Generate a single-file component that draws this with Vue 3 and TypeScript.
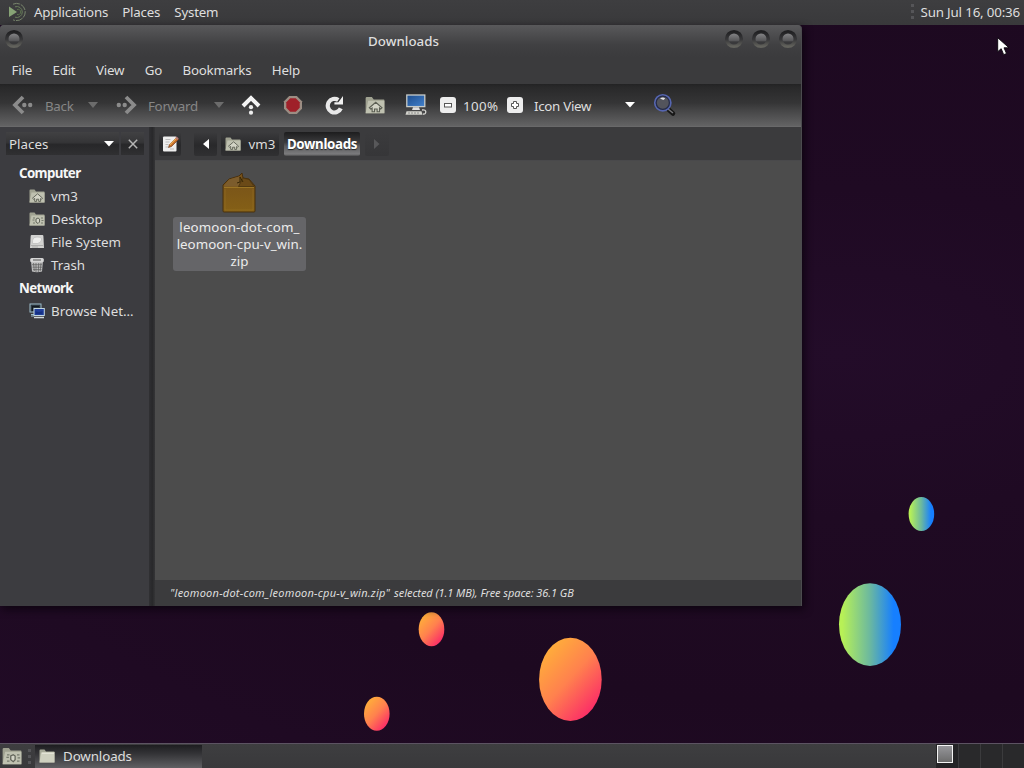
<script setup lang="ts">
interface Place {
  label: string
  icon?: string
}

interface Bubble {
  cx: number
  cy: number
  rx: number
  ry: number
  fill: string
}

const panelMenus: string[] = ['Applications', 'Places', 'System']
const menus: string[] = ['File', 'Edit', 'View', 'Go', 'Bookmarks', 'Help']

const places: Place[] = [
  { label: 'Computer' },
  { label: 'vm3', icon: 'home-folder' },
  { label: 'Desktop', icon: 'desktop-folder' },
  { label: 'File System', icon: 'drive' },
  { label: 'Trash', icon: 'trash' },
  { label: 'Network' },
  { label: 'Browse Net…', icon: 'network' },
]

const fileNameLines: string[] = ['leomoon-dot-com_', 'leomoon-cpu-v_win.', 'zip']

const bubbles: Bubble[] = [
  { cx: 431.5, cy: 629.3, rx: 12.8, ry: 17, fill: 'url(#warm)' },
  { cx: 376.8, cy: 713.8, rx: 12.8, ry: 17, fill: 'url(#warm)' },
  { cx: 570.4, cy: 679.4, rx: 31.3, ry: 41.6, fill: 'url(#warm)' },
  { cx: 921.4, cy: 513.9, rx: 12.8, ry: 17, fill: 'url(#cool)' },
  { cx: 870, cy: 624.6, rx: 31, ry: 41.4, fill: 'url(#cool)' },
]
</script>

<template>
  <div class="screen">
    <svg class="wallpaper" width="1024" height="768" viewBox="0 0 1024 768">
      <defs>
        <linearGradient id="warm" x1="0.1" y1="0.1" x2="0.8" y2="0.95">
          <stop offset="0" stop-color="#ffb139" />
          <stop offset="0.5" stop-color="#ff814e" />
          <stop offset="1" stop-color="#fb2968" />
        </linearGradient>
        <linearGradient id="cool" x1="0" y1="0.5" x2="1" y2="0.5">
          <stop offset="0.05" stop-color="#b8f156" />
          <stop offset="0.5" stop-color="#6bb8a0" />
          <stop offset="0.88" stop-color="#167fff" />
        </linearGradient>
        <linearGradient id="ring" x1="0" y1="0" x2="0" y2="1">
          <stop offset="0" stop-color="#202022" />
          <stop offset="0.55" stop-color="#39393b" />
          <stop offset="1" stop-color="#62625c" />
        </linearGradient>
        <linearGradient id="knob" x1="0" y1="0" x2="0" y2="1">
          <stop offset="0.1" stop-color="#858587" />
          <stop offset="0.6" stop-color="#59595b" />
          <stop offset="0.7" stop-color="#39393b" />
        </linearGradient>
        <linearGradient id="box" x1="0" y1="0" x2="0" y2="1">
          <stop offset="0" stop-color="#75501a" />
          <stop offset="1" stop-color="#856016" />
        </linearGradient>
        <linearGradient id="display" x1="0" y1="0" x2="1" y2="1">
          <stop offset="0" stop-color="#1d4c8c" />
          <stop offset="1" stop-color="#4382cd" />
        </linearGradient>
        <symbol id="folder" viewBox="0 0 16 16">
          <path d="M.5 2.5Q.5 1.5 1.5 1.5h4l1.5 2h8q.5 0 .5.5v10.5H.5z" fill="#a5a796" />
          <path d="M3 4h12.5v10.5H.5L2 5z" fill="#cfd0bf" />
          <path d="M3 5.5h12" stroke="#e3e3d6" />
        </symbol>
        <symbol id="home-folder" viewBox="0 0 16 16">
          <path d="M.5 2.5Q.5 1.5 1.5 1.5h4l1.5 2h8q.5 0 .5.5v10.5H.5z" fill="#a0a291" />
          <path d="M2.5 4.5h13v10H.5z" fill="#bfc1b0" />
          <path d="M3.5 10.2 8.6 5.8l5 4.4-1 1-1-.8v3H9.7v-2.2H7.6v2.2H5.7v-3l-1.1.8z" fill="#d3d4c6" stroke="#5c5f54" stroke-width=".9" />
        </symbol>
        <symbol id="desktop-folder" viewBox="0 0 16 16">
          <path d="M.5 2.5Q.5 1.5 1.5 1.5h4l1.5 2h8q.5 0 .5.5v10.5H.5z" fill="#a0a291" />
          <path d="M2.5 4.5h13v10H.5z" fill="#bfc1b0" />
          <path d="M4 7h2M3.5 9h2M4 12h2M12 7h2M12.5 9.5h2M12 12h2" stroke="#777b6d" />
          <path d="m9 7 1.5 1v3L9 12.5 7 11V8z" fill="#d3d4c6" stroke="#616459" />
        </symbol>
        <symbol id="drive" viewBox="0 0 16 16">
          <path d="M2.5 1h11q.8 0 .9.9L15 14H1L1.7 1.9Q1.8 1 2.5 1z" fill="#d2d2d0" />
          <path d="M3.5 9.5Q2.8 3 8 3t4.5 3-4 3.5z" fill="#eeeeec" stroke="#bbb" stroke-width=".7" />
          <path d="M2 11.5h12M3 13h6" stroke="#a4a4a3" stroke-width=".8" />
        </symbol>
        <symbol id="trash" viewBox="0 0 16 16">
          <path d="M2 4h12l-1 10.5q-5 1.5-10 0z" fill="#bdbdbd" />
          <path d="m4.5 6 .8 8M7 6v9M9.7 6l-.4 9M12 6l-.8 8M3 7.7h10M3.5 10.2h9.5M4 12.6h8.5" stroke="#5c5c5c" stroke-width=".7" />
          <rect x="1.2" y="1" width="13.6" height="4.2" rx="1.5" fill="#d5d5d5" />
          <path d="M4 3h8" stroke="#555" />
        </symbol>
        <symbol id="network" viewBox="0 0 16 16">
          <rect x="1" y="1" width="11" height="8" fill="#2a353c" stroke="#9dbdcb" />
          <path d="M3 3h7v1H4v4H3z" fill="#101820" />
          <path d="M2 11.5h3M2 13h3" stroke="#9dbdcb" />
          <rect x="5" y="5.5" width="10.3" height="7" fill="#203e9b" stroke="#c0d5de" />
          <path d="M6.5 8q3 2 7 0v3h-7z" fill="#153083" />
          <path d="M5 14.5h10" stroke="#d1dade" stroke-width="1.5" />
        </symbol>
      </defs>
      <ellipse v-for="(b, i) in bubbles" :key="i" :cx="b.cx" :cy="b.cy" :rx="b.rx" :ry="b.ry" :fill="b.fill" />
    </svg>

    <header class="panel top-panel">
      <svg class="logo" width="20" height="20" viewBox="0 0 20 20" fill="none">
        <path d="M1 4.5 9 10 1 15z" fill="#87a376" />
        <path d="M5 2.2A8.6 8.6 0 1 1 5 17.8" stroke="#79866d" stroke-width="1" stroke-dasharray="7 1" />
        <path d="M7 4.8a5.5 5.5 0 1 1 0 10.4" stroke="#697d5b" />
        <path d="M9 7.5a2.7 2.7 0 1 1 0 5" stroke="#5c704e" />
      </svg>
      <nav class="panel-menus">
        <span v-for="m in panelMenus" :key="m">{{ m }}</span>
      </nav>
      <i class="grip"></i>
      <time class="clock">Sun Jul 16, 00:36</time>
    </header>

    <main class="workspace">
      <section class="window">
        <div class="titlebar">
          <svg class="knob" width="20" height="20" viewBox="0 0 20 20">
            <circle cx="10" cy="10" r="7.3" fill="url(#knob)" stroke="url(#ring)" stroke-width="3.6" />
          </svg>
          <span class="title">Downloads</span>
          <div class="controls">
            <svg v-for="n in 3" :key="n" class="knob" width="20" height="20" viewBox="0 0 20 20">
              <circle cx="10" cy="10" r="7.3" fill="url(#knob)" stroke="url(#ring)" stroke-width="3.6" />
            </svg>
          </div>
        </div>

        <nav class="menubar">
          <span v-for="m in menus" :key="m">{{ m }}</span>
        </nav>

        <div class="toolbar">
          <div class="tool nav-back">
            <svg width="22" height="20" viewBox="0 0 22 20">
              <path d="M11 2 3 10l8 8" fill="none" stroke="#8b8b8b" stroke-width="3.8" />
              <circle cx="12.3" cy="10" r="2.2" fill="#8b8b8b" /><circle cx="18.2" cy="10" r="2.2" fill="#8b8b8b" />
            </svg>
            <span class="tool-label">Back</span>
            <svg class="caret" width="10" height="6"><path d="M0 0h10L5 6z" fill="#6c6c6c" /></svg>
          </div>
          <div class="tool nav-forward">
            <svg width="22" height="20" viewBox="0 0 22 20">
              <path d="m11 2 8 8-8 8" fill="none" stroke="#8b8b8b" stroke-width="3.8" />
              <circle cx="9.7" cy="10" r="2.2" fill="#8b8b8b" /><circle cx="3.8" cy="10" r="2.2" fill="#8b8b8b" />
            </svg>
            <span class="tool-label">Forward</span>
            <svg class="caret" width="10" height="6"><path d="M0 0h10L5 6z" fill="#6c6c6c" /></svg>
          </div>
          <svg class="up" width="20" height="22" viewBox="0 0 20 22">
            <path d="m2 12 8-8 8 8" fill="none" stroke="#f3f3f3" stroke-width="4" />
            <circle cx="10" cy="13.2" r="2.1" fill="#eee" /><circle cx="10" cy="18.7" r="2.1" fill="#eee" />
          </svg>
          <svg class="stop" width="20" height="20" viewBox="0 0 20 20">
            <path d="M6.2 1h7.6L19 6.2v7.6L13.8 19H6.2L1 13.8V6.2z" fill="#9c8d83" />
            <path d="M7.2 3.3h5.6l3.9 3.9v5.6l-3.9 3.9H7.2l-3.9-3.9V7.2z" fill="#9f2029" />
          </svg>
          <svg class="reload" width="20" height="20" viewBox="0 0 20 20">
            <path d="M14.3 5A6.8 6.8 0 1 0 16.8 13.4" fill="none" stroke="#e8e8e8" stroke-width="4.2" />
            <path d="M19 1V9.5h-8.6V7.3h4z" fill="#f0f0f0" />
          </svg>
          <svg class="home" width="20" height="20"><use href="#home-folder" width="20" height="20" /></svg>
          <svg class="computer" width="22" height="22" viewBox="0 0 22 22">
            <rect x="1.8" y="1" width="18" height="11.6" fill="url(#display)" stroke="#c8ccc9" stroke-width="1.3" />
            <path d="M8 13.2h6l1 2.8H7z" fill="#dedede" />
            <path d="M1.5 17.2h15l1 3.6H.5z" fill="#d3d3cd" />
            <path d="M3 19h12" stroke="#7c7c78" stroke-width=".8" stroke-dasharray="2 1" />
            <path d="M17 16q4-.5 3.8 2t-2.8 2" fill="none" stroke="#d8d8d4" stroke-width="1.3" />
          </svg>
          <svg class="zoom-button zoom-out" width="16" height="16" viewBox="0 0 16 16">
            <rect width="16" height="16" rx="3" fill="#ededed" />
            <rect x="4.5" y="6.5" width="7" height="3.5" fill="#fff" stroke="#555" />
          </svg>
          <span class="zoom-level">100%</span>
          <svg class="zoom-button zoom-in" width="16" height="16" viewBox="0 0 16 16">
            <rect width="16" height="16" rx="3" fill="#ededed" />
            <path d="M6.5 4.5h3v2h2v3h-2v2h-3v-2h-2v-3h2z" fill="#fff" stroke="#555" />
          </svg>
          <span class="view-mode">Icon View</span>
          <svg class="view-caret" width="10" height="6"><path d="M0 0h10L5 5.5z" fill="#fff" /></svg>
          <svg class="search" width="24" height="24" viewBox="0 0 24 24">
            <path d="m15.5 16.5 4.5 4" stroke="#171717" stroke-width="4.5" stroke-linecap="round" />
            <path d="m15 16 5 4" stroke="#77777a" stroke-width="1.4" />
            <circle cx="9.8" cy="9.8" r="8" fill="#53545c" stroke="#5565b0" stroke-width="1.8" />
            <circle cx="9.8" cy="9.8" r="6.6" fill="none" stroke="#252b48" stroke-width="1.2" />
            <path d="M7 5.5q3-2 5.2 0l-1.8 1.5z" fill="#e4e4e4" />
          </svg>
        </div>

        <div class="body">
          <aside class="sidebar">
            <div class="side-header">
              <div class="side-select">
                <span>Places</span>
                <svg width="10" height="6"><path d="M0 0h10L5 5.5z" fill="#fff" /></svg>
              </div>
              <div class="side-close">
                <svg width="10" height="10"><path d="m.8.8 8.4 8.4M9.2.8.8 9.2" stroke="#b4b4b4" stroke-width="1.5" /></svg>
              </div>
            </div>
            <ul class="places">
              <li v-for="p in places" :key="p.label" :class="{ heading: !p.icon }">
                <svg v-if="p.icon" width="16" height="16"><use :href="'#' + p.icon" width="16" height="16" /></svg>
                <span>{{ p.label }}</span>
              </li>
            </ul>
          </aside>
          <div class="splitter"></div>
          <div class="content">
            <div class="pathbar">
              <div class="path-button edit">
                <svg width="18" height="18" viewBox="0 0 18 18">
                  <rect x="2" y="1.5" width="13.5" height="15" rx="1" fill="#eee" />
                  <path d="M4.5 4.5h5M4.5 7h4M4.5 9.5h3M4.5 12h3M9 14h4" stroke="#bcbcbc" />
                  <path d="m7.5 12.5 1-3 7-7 2 2-7 7z" fill="#c66c25" stroke="#704027" stroke-width=".7" />
                  <path d="m8.8 9.8 6.5-6.5" stroke="#edaf5a" stroke-width="1.2" />
                  <path d="m14.2 3 1.5-1.5 2 2-1.5 1.5z" fill="#b57a75" />
                </svg>
              </div>
              <div class="path-button previous">
                <svg width="6" height="10"><path d="M6 0v10L0 5z" fill="#fff" /></svg>
              </div>
              <div class="path-button parent">
                <svg width="16" height="16"><use href="#home-folder" width="16" height="16" /></svg>
                <span>vm3</span>
              </div>
              <div class="path-button current"><span>Downloads</span></div>
              <div class="path-button next">
                <svg width="6" height="10"><path d="M0 0v10l5.5-5z" fill="#58585a" /></svg>
              </div>
            </div>
            <div class="file-view">
              <figure class="file">
                <svg width="36" height="42" viewBox="0 0 36 42">
                  <path d="M1 12 7 6l10-3 3-3 1 5 6 1 6 7v25q0 1-1 1H2q-1 0-1-1z" fill="url(#box)" stroke="#49300d" />
                  <path d="M1.5 13.5 7 6.5l10-3 1.5 4-2 6z" fill="#7c5c2c" />
                  <path d="M16.5 13.5 21 5l6 1.5 5 7z" fill="#6b4a17" stroke="#45300e" stroke-width=".7" />
                  <path d="m15 10 3-1V4l3 5" fill="none" stroke="#372706" />
                  <path d="M2 14.5h30" stroke="#9b7525" />
                  <path d="M3 16v21h28V16" fill="none" stroke="#a07926" stroke-width=".7" opacity=".6" />
                </svg>
                <figcaption>
                  <span v-for="line in fileNameLines" :key="line">{{ line }}</span>
                </figcaption>
              </figure>
            </div>
            <footer class="statusbar">
              <span>"leomoon-dot-com_leomoon-cpu-v_win.zip"</span>
              <span class="status-detail">selected (1.1 MB), Free space: 36.1 GB</span>
            </footer>
          </div>
        </div>
      </section>
    </main>

    <footer class="panel bottom-panel">
      <svg class="show-desktop" width="20" height="20"><use href="#desktop-folder" width="20" height="20" /></svg>
      <i class="grip"></i>
      <div class="task">
        <svg width="16" height="16"><use href="#folder" width="16" height="16" /></svg>
        <span>Downloads</span>
      </div>
      <div class="pager">
        <div class="desk active"><i></i></div>
        <div class="desk"></div>
        <div class="desk"></div>
        <div class="desk"></div>
      </div>
    </footer>

    <svg class="pointer" width="14" height="20" viewBox="0 0 14 20">
      <path d="M.7.7v14l3.5-3 2.5 6 2.8-1.2L7 10.8h5z" fill="#fff" stroke="#08030a" stroke-width=".9" />
    </svg>
  </div>
</template>

<style>
html,
body {
  margin: 0;
  overflow: hidden;
}
</style>

<style scoped>
.screen {
  position: relative;
  display: flex;
  flex-direction: column;
  width: 1024px;
  height: 768px;
  overflow: hidden;
  background: radial-gradient(ellipse at 82% 46%, #230c29 0, #1f0a23 28%, #1d0920 60%, #210b26 100%);
  color: #dedede;
  font-family: "Noto Sans", sans-serif;
  font-size: 13.33px;
  line-height: 18px;
  white-space: nowrap;
  cursor: default;
}
.screen svg { display: block; flex: none; }
.screen .wallpaper { position: absolute; inset: 0; }
.panel {
  position: relative;
  box-sizing: border-box;
  display: flex;
  align-items: center;
  flex: none;
  height: 25px;
  background: linear-gradient(#3e3e40, #39393b);
}
.top-panel { padding-bottom: 2px; }
.logo { margin-left: 8px; }
.panel-menus { display: flex; gap: 14px; margin-left: 6px; letter-spacing: -0.2px; }
.grip {
  width: 3px;
  height: 15px;
  background: repeating-linear-gradient(#555558 0 3px, transparent 3px 6px);
}
.top-panel .grip { margin-left: auto; }
.clock { margin: 0 4px 0 7px; letter-spacing: -0.17px; }

.workspace { position: relative; flex: 1; }
.window {
  display: flex;
  flex-direction: column;
  width: 802px;
  height: 581px;
  box-sizing: border-box;
  border-right: 1px solid #4b4b4e;
  border-radius: 4px 4px 0 0;
  overflow: hidden;
  background: #3b3b3d;
  box-shadow: 2px 3px 9px #09020bcc;
}
.titlebar {
  position: relative;
  display: flex;
  justify-content: space-between;
  flex: none;
  height: 32px;
  padding: 4px 3px 0 4px;
  box-sizing: border-box;
  background: linear-gradient(#59595b 0, #4b4b4d 35%, #404042 62%, #3b3b3d 100%);
}
.title { margin: 3px 0 0 5px; padding-left: 54px; font-weight: 500; }
.controls { display: flex; gap: 7px; }
.menubar {
  display: flex;
  flex: none;
  gap: 20.5px;
  height: 27px;
  padding: 4px 11.6px 0;
  box-sizing: border-box;
  background: #3b3b3d;
  letter-spacing: -0.23px;
}
.toolbar {
  display: flex;
  align-items: center;
  flex: none;
  height: 43px;
  padding-left: 12px;
  box-sizing: border-box;
  border-bottom: 1px solid #69696a;
  background: linear-gradient(#232324 0, #29292a 8%, #353536 45%, #464647 64%, #636364 100%);
}
.tool { display: flex; align-items: center; color: #868686; }
.tool-label { width: 40px; margin-left: 11px; letter-spacing: -0.3px; }
.nav-forward .tool-label { width: 66px; }
.caret { margin-left: 3px; }
.nav-forward { margin-left: 17px; }
.nav-forward .caret { margin-left: 0; }
.tool-label,
.zoom-level,
.view-mode { position: relative; top: 1px; }
.up { margin-left: 17px; }
.stop { margin-left: 22px; }
.reload { margin-left: 21px; }
.home { margin-left: 21px; }
.computer { margin-left: 20px; }
.zoom-out { margin-left: 13px; }
.zoom-level { width: 44px; margin-left: 7px; letter-spacing: 0.35px; }
.view-mode { width: 91px; margin-left: 11px; letter-spacing: -0.3px; }
.search { margin-left: 18px; }

.body { display: flex; flex: 1; min-height: 0; }
.sidebar { width: 149px; flex: none; background: #3c3c40; }
.side-header {
  display: flex;
  gap: 2px;
  height: 34px;
  padding: 5px 4px 0 6px;
  box-sizing: border-box;
}
.side-select,
.side-close {
  display: flex;
  align-items: center;
  height: 23px;
  background: linear-gradient(#414143, #353537 45%, #272729 55%, #303032);
}
.side-select { justify-content: space-between; flex: none; width: 113px; padding: 0 5px 0 3px; box-sizing: border-box; }
.side-close { justify-content: center; width: 23px; }
.places { margin: 0; padding: 0; list-style: none; }
.places li { display: flex; align-items: center; gap: 6px; height: 23px; padding-left: 29px; }
.places .heading { padding-left: 19px; font-weight: 700; color: #f6f6f6; letter-spacing: -0.65px; }
.splitter { width: 6px; flex: none; background: linear-gradient(90deg, #303033 0, #28282a 55%, #353537 100%); }
.content { display: flex; flex: 1; flex-direction: column; min-width: 0; }
.pathbar {
  display: flex;
  flex: none;
  height: 34px;
  padding: 5px 4px 0;
  box-sizing: border-box;
  border-bottom: 1px solid #49494b;
}
.path-button {
  display: flex;
  align-items: center;
  justify-content: center;
  height: 24px;
  box-sizing: border-box;
  border-radius: 2px;
  background: linear-gradient(#3b3b3d, #29292b 55%, #303032);
}
.edit { width: 22px; }
.previous { width: 23px; margin-left: 13px; }
.parent { width: 58px; margin-left: 4px; gap: 8px; }
.current {
  width: 76px;
  margin-left: 5px;
  background: linear-gradient(#1d1d1e, #3b3b3d 43%, #5d5d5f 60%, #7b7b7d 92%, #4b4b4c);
  color: #fff;
  font-weight: 700;
  letter-spacing: -0.35px;
  text-shadow: 0 1px 1px #222;
}
.next { width: 24px; margin-left: 5px; background: linear-gradient(#3b3b3d, #363638); }
.file-view { flex: 1; background: #4c4c4c; }
.file {
  display: flex;
  flex-direction: column;
  align-items: center;
  width: 133px;
  margin: 12px 0 0 18px;
}
.file figcaption {
  display: flex;
  flex-direction: column;
  align-items: center;
  width: 133px;
  height: 54px;
  margin-top: 2px;
  padding-top: 2px;
  box-sizing: border-box;
  border-radius: 3px;
  background: #656568;
  line-height: 17px;
  color: #ececec;
}
.file figcaption span:first-child { letter-spacing: 0.12px; }
.statusbar {
  display: flex;
  align-items: center;
  gap: 4px;
  flex: none;
  height: 26px;
  padding-left: 15px;
  box-sizing: border-box;
  font-size: 11px;
  font-style: italic;
  letter-spacing: 0.24px;
}
.status-detail { letter-spacing: -0.07px; }

.bottom-panel { border-top: 1px solid #5c5362; }
.show-desktop { margin-left: 2px; }
.bottom-panel .grip { margin-left: 6px; }
.task {
  display: flex;
  align-items: center;
  gap: 8px;
  width: 167px;
  height: 23px;
  margin-left: 4px;
  padding-left: 4px;
  box-sizing: border-box;
  background: linear-gradient(#1d1d20 0, #353538 40%, #606063 100%);
  letter-spacing: -0.1px;
}
.pager { display: flex; height: 24px; margin-left: auto; }
.desk { width: 22px; box-sizing: border-box; border-left: 1px solid #3b3b3d; background: #29292b; }
.desk.active { border: 0; background: #242426; }
.active i {
  display: block;
  width: 16px;
  height: 18px;
  margin: 1px 0 0 1px;
  box-sizing: border-box;
  border: 1px solid #f4f4f4;
  background: linear-gradient(#96969a, #6c6c6c);
}
.screen .pointer { position: absolute; left: 997px; top: 37px; }
</style>
